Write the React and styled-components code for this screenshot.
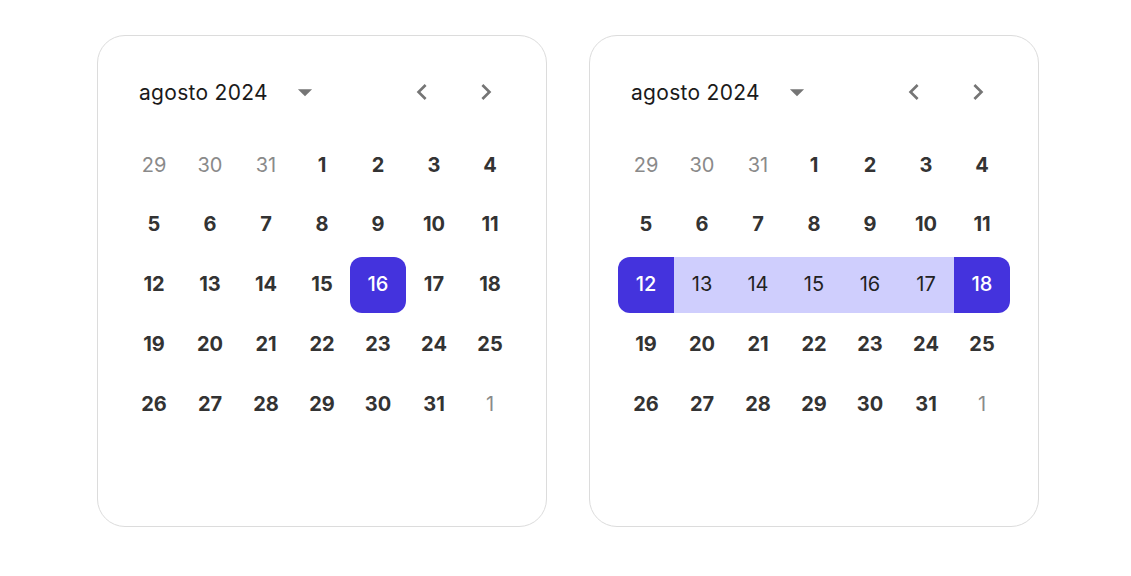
import React from 'react';
import styled, { createGlobalStyle, css } from 'styled-components';

const GlobalStyle = createGlobalStyle`
  html, body {
    margin: 0;
    padding: 0;
    background: #ffffff;
    font-family: Inter, "Noto Sans", sans-serif;
  }
`;

const Page = styled.div`
  display: flex;
  gap: 42px;
  padding: 35px 0 0 97px;
`;

const Card = styled.div`
  box-sizing: border-box;
  width: 450px;
  height: 492px;
  padding: 28px;
  border: 1px solid #dcdcdc;
  border-radius: 28px;
  background: #fff;
`;

const Header = styled.div`
  display: flex;
  align-items: center;
  height: 56px;
  padding: 0 12px 0 13px;
`;

const MonthLabel = styled.span`
  font-size: 21px;
  font-weight: 400;
  letter-spacing: 0.3px;
  color: #1a1a1a;
`;

const IconButton = styled.button`
  display: flex;
  align-items: center;
  justify-content: center;
  width: 40px;
  height: 40px;
  padding: 0;
  border: 0;
  background: none;
  color: #757575;
  cursor: pointer;
  margin-left: ${(p) => p.$ml || 0}px;
`;

const Spacer = styled.div`
  flex: 1;
`;

const Grid = styled.div`
  display: grid;
  grid-template-columns: repeat(7, 56px);
  grid-auto-rows: 56px;
  row-gap: 3.75px;
  margin-top: 17px;
`;

const Day = styled.div`
  display: flex;
  align-items: center;
  justify-content: center;
  padding-bottom: 1px;
  font-size: 20px;
  font-weight: 650;
  color: #333;

  ${(p) =>
    p.$outside &&
    css`
      font-weight: 400;
      color: #8a8a8a;
    `}

  ${(p) =>
    p.$inRange &&
    css`
      font-weight: 400;
      color: #222;
      background: #cfcefd;
    `}

  ${(p) =>
    p.$selected &&
    css`
      font-weight: 500;
      color: #fff;
      background: #4433dd;
      border-radius: 12px;
    `}

  ${(p) =>
    p.$rangeStart &&
    css`
      border-radius: 12px 0 0 12px;
    `}

  ${(p) =>
    p.$rangeEnd &&
    css`
      border-radius: 0 12px 12px 0;
    `}
`;

const DropIcon = () => (
  <svg width="34" height="34" viewBox="0 0 24 24" fill="currentColor">
    <path d="m7 10 5 5 5-5z" />
  </svg>
);

const ChevronLeft = () => (
  <svg width="32" height="32" viewBox="0 0 24 24" fill="currentColor">
    <path d="M15.41 7.41 14 6l-6 6 6 6 1.41-1.41L10.83 12z" />
  </svg>
);

const ChevronRight = () => (
  <svg width="32" height="32" viewBox="0 0 24 24" fill="currentColor">
    <path d="M10 6 8.59 7.41 13.17 12l-4.58 4.59L10 18l6-6z" />
  </svg>
);

// agosto 2024 starts on a Thursday, weeks start on Monday
const days = [
  { n: 29, outside: true },
  { n: 30, outside: true },
  { n: 31, outside: true },
  ...Array.from({ length: 31 }, (_, i) => ({ n: i + 1 })),
  { n: 1, outside: true },
];

const Calendar = ({ selected, range }) => (
  <Card>
    <Header>
      <MonthLabel>agosto 2024</MonthLabel>
      <IconButton $ml={17} aria-label="Elegir año">
        <DropIcon />
      </IconButton>
      <Spacer />
      <IconButton aria-label="Mes anterior">
        <ChevronLeft />
      </IconButton>
      <IconButton $ml={24} aria-label="Mes siguiente">
        <ChevronRight />
      </IconButton>
    </Header>
    <Grid>
      {days.map((d, i) => {
        const current = !d.outside;
        const isStart = range && current && d.n === range[0];
        const isEnd = range && current && d.n === range[1];
        const inside = range && current && d.n > range[0] && d.n < range[1];
        return (
          <Day
            key={i}
            $outside={d.outside}
            $selected={(current && d.n === selected) || isStart || isEnd}
            $rangeStart={isStart}
            $rangeEnd={isEnd}
            $inRange={inside}
          >
            {d.n}
          </Day>
        );
      })}
    </Grid>
  </Card>
);

const App = () => (
  <>
    <GlobalStyle />
    <Page>
      <Calendar selected={16} />
      <Calendar range={[12, 18]} />
    </Page>
  </>
);

export default App;
